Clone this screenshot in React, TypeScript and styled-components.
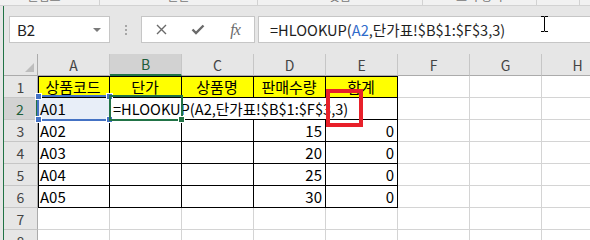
import * as React from 'react';
import styled, { createGlobalStyle } from 'styled-components';

const GREEN = '#217346';
const BLUE = '#4472c4';
const GRID = '#d4d4d4';
const HEAD_BG = '#e6e6e6';
const FONT = '"Noto Sans CJK KR", "Noto Sans", sans-serif';

const COLUMNS = ['A', 'B', 'C', 'D', 'E', 'F', 'G', 'H'];
const TITLES = ['상품코드', '단가', '상품명', '판매수량', '합계'];
const PRODUCTS = [
  { code: 'A02', qty: 15 },
  { code: 'A03', qty: 20 },
  { code: 'A04', qty: 25 },
  { code: 'A05', qty: 30 },
];
const RIBBON = [
  { label: '클립보드', width: 100 },
  { label: '글꼴', width: 158 },
  { label: '맞춤', width: 165 },
  { label: '표시 형식', width: 114 },
  { label: '', width: 43 },
  { label: '스타일', width: 120 },
];

const FORMULA_HEAD = '=HLOOKUP(';
const FORMULA_REF = 'A2';
const FORMULA_TAIL = ',단가표!$B$1:$F$3,3)';

const GlobalStyle = createGlobalStyle`
  html, body {
    margin: 0;
    padding: 0;
    background: ${HEAD_BG};
  }
  body {
    font-family: ${FONT};
  }
`;

const Window = styled.div`
  width: 590px;
  height: 240px;
  overflow: hidden;
  background: ${HEAD_BG};
`;

const Ribbon = styled.div`
  display: flex;
  height: 6px;
  box-sizing: border-box;
  overflow: hidden;
  background: #f1f1f1;
  border-bottom: 1px solid #d2d2d2;
`;

const RibbonGroup = styled.div<{ $w: number }>`
  flex: 0 0 ${p => p.$w}px;
  box-sizing: border-box;
  border-right: 1px solid #d2d2d2;
  display: flex;
  justify-content: center;
`;

const RibbonLabel = styled.span`
  margin-top: -12px;
  font-size: 12px;
  line-height: 16px;
  color: #777;
`;

const Body = styled.div`
  margin-left: 3px;
  border-left: 1px solid ${GREEN};
`;

const FormulaRow = styled.div`
  display: flex;
  align-items: flex-start;
  height: 48px;
  box-sizing: border-box;
  padding: 10px 0 0 5px;
`;

const NameBox = styled.div`
  box-sizing: border-box;
  flex: 0 0 101px;
  height: 27px;
  display: flex;
  align-items: center;
  justify-content: space-between;
  padding: 0 8px 0 7px;
  background: #fff;
  border: 1px solid #c6c6c6;
  font-size: 15px;
  color: #222;
`;

const DropArrow = styled.span`
  width: 0;
  height: 0;
  border-left: 4px solid transparent;
  border-right: 4px solid transparent;
  border-top: 4px solid #7a7a7a;
`;

const Grip = styled.div`
  flex: 0 0 31px;
  height: 27px;
  display: flex;
  flex-direction: column;
  align-items: center;
  justify-content: center;
  gap: 2px;
`;

const GripDot = styled.span`
  width: 2px;
  height: 2px;
  background: #a6a6a6;
`;

const FxBox = styled.div`
  box-sizing: border-box;
  flex: 0 0 110px;
  height: 27px;
  display: flex;
  align-items: center;
  background: #fff;
  border: 1px solid #c6c6c6;
`;

const FxSlot = styled.div<{ $w: number }>`
  flex: 0 0 ${p => p.$w}px;
  display: flex;
  justify-content: center;
  align-items: center;
  color: #6a6a6a;
`;

const FxText = styled.span`
  font-family: "Liberation Serif", serif;
  font-style: italic;
  font-size: 16px;
  letter-spacing: -1px;
  color: #6a6a6a;
`;

const FormulaInput = styled.div`
  position: relative;
  box-sizing: border-box;
  flex: 1;
  height: 27px;
  margin-left: 3px;
  padding-left: 11px;
  display: flex;
  align-items: center;
  background: #fff;
  border: 1px solid #c6c6c6;
  border-right: none;
  font-size: 14.6px;
  color: #1e1e1e;
  white-space: nowrap;
`;

const RefText = styled.span`
  color: #2f6bcb;
`;

const Caret = styled.svg`
  position: absolute;
  left: 281px;
  top: -2px;
`;

const Sheet = styled.div`
  position: relative;
  display: grid;
  grid-template-columns: 34px repeat(8, 72px);
  grid-auto-rows: 22px;
`;

const Corner = styled.div`
  box-sizing: border-box;
  display: flex;
  align-items: flex-end;
  justify-content: flex-end;
  padding: 0 3px 3px 0;
  background: ${HEAD_BG};
  border-right: 1px solid #ababab;
  border-bottom: 1px solid #ababab;
`;

const ColHead = styled.div<{ $active?: boolean }>`
  box-sizing: border-box;
  display: flex;
  align-items: center;
  justify-content: center;
  background: ${p => (p.$active ? '#d2d2d2' : HEAD_BG)};
  border-right: 1px solid #c6c6c6;
  border-bottom: ${p => (p.$active ? `2px solid ${GREEN}` : '1px solid #ababab')};
  font-size: 14px;
  color: ${p => (p.$active ? '#1d5e3a' : '#444')};
`;

const RowHead = styled.div<{ $active?: boolean }>`
  box-sizing: border-box;
  display: flex;
  align-items: center;
  justify-content: center;
  background: ${p => (p.$active ? '#d2d2d2' : HEAD_BG)};
  border-right: ${p => (p.$active ? `2px solid ${GREEN}` : '1px solid #ababab')};
  border-bottom: 1px solid #c6c6c6;
  font-size: 14px;
  color: ${p => (p.$active ? '#1d5e3a' : '#444')};
`;

type Align = 'left' | 'center' | 'right';

const Cell = styled.div<{ $boxed?: boolean; $fill?: string; $align?: Align; $leftEdge?: boolean; $topEdge?: boolean }>`
  box-sizing: border-box;
  display: flex;
  align-items: center;
  justify-content: ${p => (p.$align === 'right' ? 'flex-end' : p.$align === 'center' ? 'center' : 'flex-start')};
  padding: 0 3px 0 2px;
  background: ${p => p.$fill ?? '#fff'};
  border-right: 1px solid ${p => (p.$boxed ? '#000' : GRID)};
  border-bottom: 1px solid ${p => (p.$boxed ? '#000' : GRID)};
  box-shadow: ${p =>
    [p.$leftEdge ? 'inset 1px 0 0 #000' : '', p.$topEdge ? 'inset 0 1px 0 #000' : ''].filter(Boolean).join(', ') || 'none'};
  font-size: 15px;
  line-height: 20px;
  color: #000;
  white-space: nowrap;
  overflow: hidden;
`;

const Editor = styled.div`
  position: absolute;
  left: 106px;
  top: 44px;
  width: 287px;
  height: 21px;
  z-index: 1;
  padding-left: 3px;
  box-sizing: border-box;
  display: flex;
  align-items: center;
  background: #fff;
  font-size: 14.6px;
  color: #000;
  white-space: nowrap;
`;

const RefFrame = styled.div`
  position: absolute;
  left: 33px;
  top: 41px;
  width: 74px;
  height: 26px;
  box-sizing: border-box;
  border: 2px solid ${BLUE};
  z-index: 2;
`;

const Handle = styled.span<{ $x: 'left' | 'right'; $y: 'top' | 'bottom' }>`
  position: absolute;
  ${p => p.$x}: -4px;
  ${p => p.$y}: -4px;
  width: 5px;
  height: 5px;
  background: ${BLUE};
  border: 1px solid #fff;
`;

const ActiveFrame = styled.div`
  position: absolute;
  left: 105px;
  top: 41px;
  width: 74px;
  height: 26px;
  box-sizing: border-box;
  border: 2px solid ${GREEN};
  z-index: 3;
`;

const FillHandle = styled.span`
  position: absolute;
  right: -4px;
  bottom: -4px;
  width: 5px;
  height: 5px;
  background: ${GREEN};
  border: 1px solid #fff;
`;

const Annotation = styled.div`
  position: absolute;
  left: 322px;
  top: 35px;
  width: 37px;
  height: 38px;
  box-sizing: border-box;
  border: 4px solid #e8202a;
  z-index: 4;
`;

function EmptyCells({ from }: { from: number }) {
  return (
    <>
      {COLUMNS.slice(from).map(c => (
        <Cell key={c} />
      ))}
    </>
  );
}

export default function App() {
  return (
    <Window>
      <GlobalStyle />
      <Ribbon>
        {RIBBON.map((g, i) => (
          <RibbonGroup key={i} $w={g.width}>
            <RibbonLabel>{g.label}</RibbonLabel>
          </RibbonGroup>
        ))}
      </Ribbon>
      <Body>
        <FormulaRow>
          <NameBox>
            B2
            <DropArrow />
          </NameBox>
          <Grip>
            <GripDot />
            <GripDot />
            <GripDot />
          </Grip>
          <FxBox>
            <FxSlot $w={38}>
              <svg width="11" height="11" viewBox="0 0 11 11">
                <path d="M1 1L10 10M10 1L1 10" stroke="currentColor" strokeWidth="1.4" fill="none" />
              </svg>
            </FxSlot>
            <FxSlot $w={36}>
              <svg width="14" height="11" viewBox="0 0 14 11">
                <path d="M1.5 5.5L5 9L12.5 1.5" stroke="currentColor" strokeWidth="2.4" fill="none" />
              </svg>
            </FxSlot>
            <FxSlot $w={38}>
              <FxText>fx</FxText>
            </FxSlot>
          </FxBox>
          <FormulaInput>
            {FORMULA_HEAD}
            <RefText>{FORMULA_REF}</RefText>
            {FORMULA_TAIL}
            <Caret width="9" height="18" viewBox="0 0 9 18">
              <path d="M1 1.5h3M5 1.5h3M4.5 1.5v15M1 16.5h3M5 16.5h3" stroke="#000" strokeWidth="1" fill="none" />
            </Caret>
          </FormulaInput>
        </FormulaRow>

        <Sheet>
          <Corner>
            <svg width="9" height="9" viewBox="0 0 9 9">
              <path d="M9 0V9H0Z" fill="#bdbdbd" />
            </svg>
          </Corner>
          {COLUMNS.map(c => (
            <ColHead key={c} $active={c === 'B'}>
              {c}
            </ColHead>
          ))}

          <RowHead>1</RowHead>
          {TITLES.map((t, i) => (
            <Cell key={t} $boxed $fill="#ffff00" $align="center" $leftEdge={i === 0} $topEdge>
              {t}
            </Cell>
          ))}
          <EmptyCells from={5} />

          <RowHead $active>2</RowHead>
          <Cell $boxed $fill="#e8eef8" $leftEdge>
            A01
          </Cell>
          <Cell $boxed />
          <Cell $boxed />
          <Cell $boxed />
          <Cell $boxed />
          <EmptyCells from={5} />

          {PRODUCTS.map((p, r) => (
            <React.Fragment key={p.code}>
              <RowHead>{r + 3}</RowHead>
              <Cell $boxed $leftEdge>
                {p.code}
              </Cell>
              <Cell $boxed />
              <Cell $boxed />
              <Cell $boxed $align="right">
                {p.qty}
              </Cell>
              <Cell $boxed $align="right">
                0
              </Cell>
              <EmptyCells from={5} />
            </React.Fragment>
          ))}

          {[7, 8].map(n => (
            <React.Fragment key={n}>
              <RowHead>{n}</RowHead>
              <EmptyCells from={0} />
            </React.Fragment>
          ))}

          <Editor>
            {FORMULA_HEAD}
            {FORMULA_REF}
            {FORMULA_TAIL}
          </Editor>
          <RefFrame>
            <Handle $x="left" $y="top" />
            <Handle $x="right" $y="top" />
            <Handle $x="left" $y="bottom" />
            <Handle $x="right" $y="bottom" />
          </RefFrame>
          <ActiveFrame>
            <FillHandle />
          </ActiveFrame>
          <Annotation />
        </Sheet>
      </Body>
    </Window>
  );
}
